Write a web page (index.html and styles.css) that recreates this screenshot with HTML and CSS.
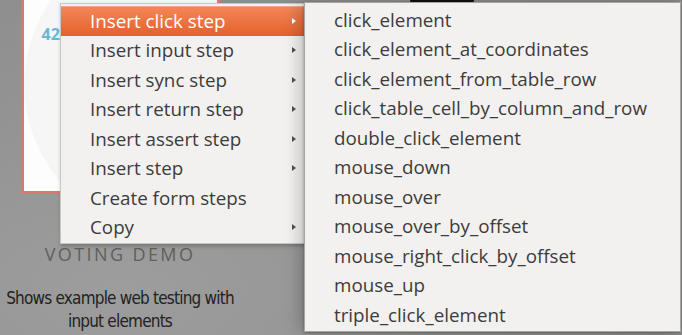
FILE: index.html
```html
<!DOCTYPE html>
<html lang="en">
<head>
    <meta charset="UTF-8">
    <title>Context menu</title>
    <link rel="stylesheet" href="styles.css">
</head>
<body>

<div class="page">
    <div class="tile">
        <div class="thumb">
            <div class="logo"><span class="logo-num">42</span></div>
        </div>
        <div class="tile-title">VOTING DEMO</div>
        <div class="tile-desc">Shows example web testing with<br>input elements</div>
    </div>
    <div class="tile tile-next">
        <div class="thumb-dark"></div>
    </div>
</div>

<!-- hlavne menu -->
<ul class="menu main-menu">
    <li class="active">Insert click step<span class="arrow"></span></li>
    <li>Insert input step<span class="arrow"></span></li>
    <li>Insert sync step<span class="arrow"></span></li>
    <li>Insert return step<span class="arrow"></span></li>
    <li>Insert assert step<span class="arrow"></span></li>
    <li>Insert step<span class="arrow"></span></li>
    <li>Create form steps</li>
    <li>Copy<span class="arrow"></span></li>
</ul>

<!-- podmenu -->
<ul class="menu sub-menu">
    <li>click_element</li>
    <li>click_element_at_coordinates</li>
    <li>click_element_from_table_row</li>
    <li>click_table_cell_by_column_and_row</li>
    <li>double_click_element</li>
    <li>mouse_down</li>
    <li>mouse_over</li>
    <li>mouse_over_by_offset</li>
    <li>mouse_right_click_by_offset</li>
    <li>mouse_up</li>
    <li>triple_click_element</li>
</ul>

</body>
</html>
```

FILE: styles.css
```css
body {
    margin: 0;
    width: 682px;
    height: 335px;
    overflow: hidden;
    position: relative;
    background: radial-gradient(ellipse at 120px 290px, #9d9d9d 0%, #939393 45%, #8a8a8a 100%);
    font-family: 'Open Sans', sans-serif;
}
.page {
    display: flex;
    gap: 40px;
}
.tile {
    width: 240px;
    display: flex;
    flex-direction: column;
    align-items: center;
}
.thumb {
    box-sizing: border-box;
    width: 199px;
    height: 204px;
    margin-top: -10px;
    border: 3px solid #e27474;
    background-color: #fdfdfd;
    overflow: hidden;
}
.logo {
    width: 292px;
    height: 292px;
    margin: -54px 0 0 1px;
    border-radius: 50%;
    background-color: #f6f6f6;
    box-shadow: 0 0 2px rgba(0, 0, 0, 0.08);
}
.logo-num {
    display: block;
    padding: 84px 0 0 17px;
    font-size: 16px;
    font-weight: 700;
    color: #6ab7d3;
}
.tile-title {
    margin-top: 48px;
    font-size: 18px;
    line-height: 24px;
    letter-spacing: 2.4px;
    color: #5f5f5f;
}
.tile-desc {
    margin-top: 21px;
    font-family: 'DejaVu Sans Condensed', 'DejaVu Sans', sans-serif;
    font-stretch: condensed;
    font-size: 17px;
    line-height: 23px;
    letter-spacing: -0.8px;
    text-align: center;
    color: #222;
    white-space: nowrap;
}
.tile-next {
    width: 200px;
    align-items: flex-start;
}
.thumb-dark {
    width: 64px;
    height: 3px;
    margin-left: 130px;
    border-radius: 0 0 30px 30px;
    background-color: #111;
}

.menu {
    list-style-type: none;
    margin: 0;
    position: absolute;
    box-sizing: border-box;
    background-color: #f2f1f0;
    color: #3c3c3c;
    font-size: 18.8px;
}
.menu li {
    height: 29.5px;
    display: flex;
    align-items: center;
    justify-content: space-between;
    white-space: nowrap;
}
.main-menu {
    left: 60px;
    top: 3px;
    width: 245px;
    height: 241px;
    padding: 2px 0 0;
    border: 1px solid #c9c7c4;
    box-shadow: 1px 2px 4px rgba(0, 0, 0, 0.25);
}
.main-menu li {
    padding: 0 8px 0 29px;
}
.main-menu li.active {
    color: #fff;
    background: linear-gradient(#f4875a, #e4612b);
    box-shadow: inset 0 1px 0 rgba(255, 255, 255, 0.25);
}
.arrow {
    width: 0;
    height: 0;
    border-top: 3.5px solid transparent;
    border-bottom: 3.5px solid transparent;
    border-left: 4px solid #4f4f4f;
}
.active .arrow {
    border-left-color: #fff;
}
.sub-menu {
    left: 304px;
    top: 2px;
    width: 377px;
    height: 330px;
    padding: 2px 0 0;
    border: 1px solid #a7a5a2;
    box-shadow: -6px 0 14px rgba(0, 0, 0, 0.18), 0 1px 3px rgba(0, 0, 0, 0.3);
}
.sub-menu li {
    padding: 0 10px 0 29px;
}
```
